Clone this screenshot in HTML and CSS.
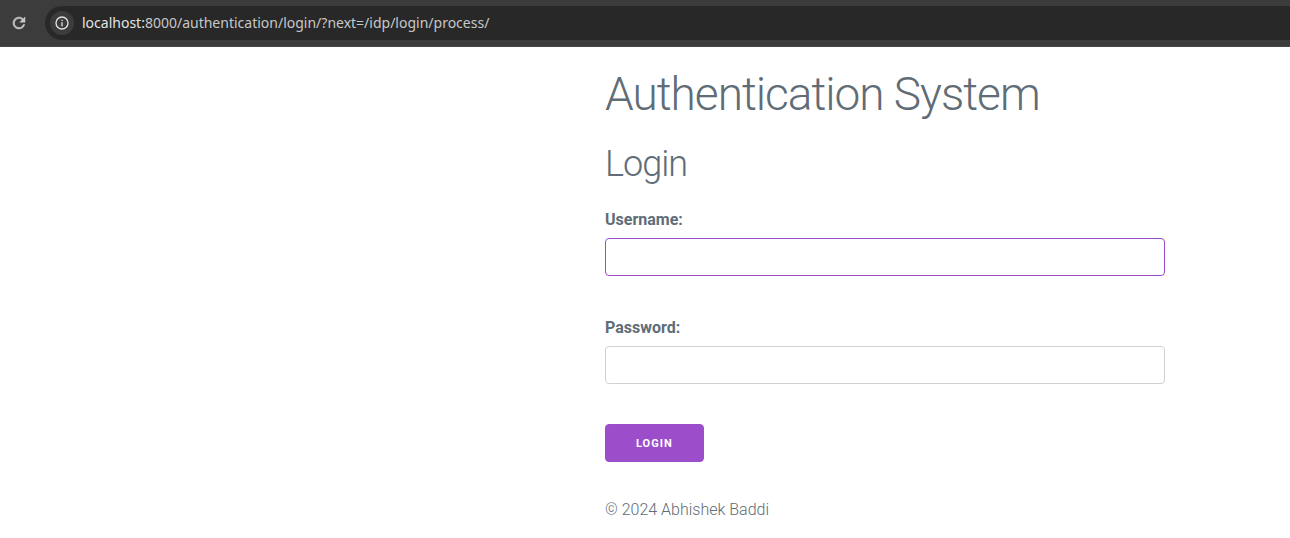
FILE: index.html
```html
<!DOCTYPE html>
<html lang="en">
<head>
<meta charset="utf-8">
<title>Authentication System</title>
<link rel="stylesheet" href="styles.css">
</head>
<body>
<header class="toolbar">
  <button class="reload" type="button" aria-label="Reload">
    <svg width="18" height="18" viewBox="0 0 24 24" fill="currentColor" stroke="currentColor" stroke-width=".7"><path d="M17.65 6.35A7.96 7.96 0 0 0 12 4a8 8 0 1 0 7.73 10h-2.08A6 6 0 1 1 12 6c1.66 0 3.14.69 4.22 1.78L13 11h7V4z"/></svg>
  </button>
  <div class="address">
    <button class="info" type="button" aria-label="Site information">
      <svg width="16" height="16" viewBox="0 0 24 24" fill="currentColor"><path d="M11 7h2v2h-2zm0 4h2v6h-2zm1-9a10 10 0 1 0 0 20 10 10 0 0 0 0-20zm0 18a8 8 0 1 1 0-16 8 8 0 0 1 0 16z"/></svg>
    </button>
    <p class="url"><span class="host">localhost:</span>8000/authentication/login/?next=/idp/login/process/</p>
  </div>
</header>
<main class="page">
  <h1 class="title">Authentication System</h1>
  <h2 class="subtitle">Login</h2>
  <form class="form">
    <div class="field">
      <label class="label" for="username">Username:</label>
      <input class="input input-active" id="username" type="text">
    </div>
    <div class="field">
      <label class="label" for="password">Password:</label>
      <input class="input" id="password" type="password">
    </div>
    <button class="submit" type="submit">Login</button>
  </form>
  <footer class="footer">© 2024 Abhishek Baddi</footer>
</main>
</body>
</html>
```
FILE: styles.css
```css
* { box-sizing: border-box; }
body {
  margin: 0;
  background: #fff;
  color: #606c76;
  font: 300 16px/26px Roboto, sans-serif;
}
.toolbar {
  display: flex;
  align-items: center;
  gap: 10px;
  height: 47px;
  padding-left: 10px;
  border-bottom: 1px solid #474747;
  background: #3c3c3c;
}
.reload, .info {
  display: flex;
  align-items: center;
  justify-content: center;
  padding: 0;
  border: 0;
  background: none;
  color: #c7c7c7;
}
.reload { width: 18px; height: 24px; }
.address {
  display: flex;
  flex: 1;
  align-items: center;
  gap: 8px;
  height: 34px;
  margin-left: 7px;
  padding-left: 5px;
  border-radius: 17px 0 0 17px;
  background: #282828;
}
.info { width: 24px; height: 24px; border-radius: 50%; background: #3c3c3c; color: #e3e3e3; }
.url { margin: 0; color: #c7c7c7; font: 400 14px/20px "Noto Sans", sans-serif; }
.host { color: #e3e3e3; }
.page { max-width: 560px; margin: 20px 125px 0 auto; }
.title, .subtitle { margin: 0 0 20px; font-weight: 300; letter-spacing: -1px; }
.title { font-size: 46px; line-height: 55px; }
.subtitle { margin-bottom: 21px; font-size: 36px; line-height: 45px; }
.label { display: block; margin-bottom: 6px; font-weight: 700; line-height: 24px; }
.field { margin-bottom: 40px; }
.input {
  display: block;
  width: 100%;
  height: 38px;
  padding: 6px 10px;
  border: 1px solid #d1d1d1;
  border-radius: 4px;
  outline: 0;
  background: transparent;
  font: inherit;
}
.input-active { border-color: #9b4dca; }
.submit {
  display: block;
  height: 38px;
  padding: 0 30px;
  border: 1px solid #9b4dca;
  border-radius: 4px;
  background: #9b4dca;
  color: #fff;
  font: 700 11px/38px Roboto, sans-serif;
  letter-spacing: 1px;
  text-transform: uppercase;
}
.footer { margin-top: 35px; }
```
